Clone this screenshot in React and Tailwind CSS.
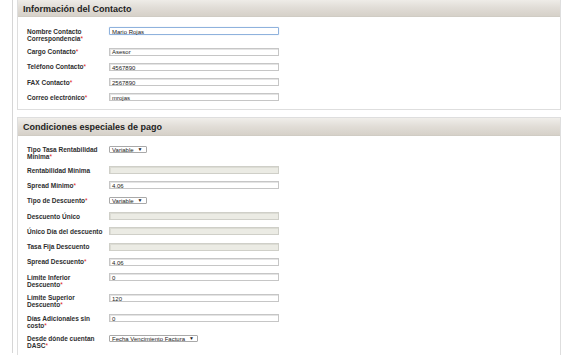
import React from "react";

const Req = () => <span className="text-[#e02020] font-normal">*</span>;

function Label({ lines, req }) {
  return (
    <div className="w-[82px] shrink-0 mt-[0.5px] text-[6.5px] leading-[7px] font-bold text-[#2e2e2e] whitespace-nowrap">
      {lines.map((l, i) => (
        <div key={i}>
          {l}
          {req && i === lines.length - 1 ? <Req /> : null}
        </div>
      ))}
    </div>
  );
}

function Field({ type, value, focus }) {
  if (type === "select") {
    return (
      <div className="h-[7px] mt-[0.5px] flex items-center pt-[1px] border border-[#a9a9a9] rounded-[1px] bg-white pl-[2px] pr-[3px] text-[6px] leading-none text-[#222] gap-[4px]">
        <span>{value}</span>
        <span className="text-[5px] leading-none -mt-[1px]">▼</span>
      </div>
    );
  }
  if (type === "disabled") {
    return (
      <div className="w-[170px] h-[8px] border border-[#cfcfc8] bg-[#ebebe4] shadow-[inset_1px_1px_0_#dcdcd4]" />
    );
  }
  return (
    <div
      className={
        "w-[170px] h-[8px] flex items-center pt-[1.5px] pl-[2px] text-[6px] leading-none text-[#222] bg-white " +
        (focus
          ? "border border-[#8fb2dd] rounded-[1px] shadow-[0_0_1px_#a9c6ea]"
          : "border border-[#c6c6c6] shadow-[inset_1px_1px_0_#e4e4e4]")
      }
    >
      {value}
    </div>
  );
}

function Row({ lines, req, type = "text", value = "", focus }) {
  const dbl = lines.length > 1;
  return (
    <div className={"flex items-start " + (dbl ? "h-[20.5px]" : "h-[15.3px]")}>
      <Label lines={lines} req={req} />
      <Field type={type} value={value} focus={focus} />
    </div>
  );
}

function Panel({ title, children, className = "" }) {
  return (
    <section className={"border border-[#dedede] bg-white " + className}>
      <div className="h-[18px] pt-[3px] flex items-center pl-[5px] bg-gradient-to-b from-[#f0eeea] via-[#e1ddd7] to-[#d6d1c9] border-b border-[#d0ccc4]">
        <span className="text-[9px] font-bold text-[#1e1e1e] leading-none">{title}</span>
      </div>
      <div className="pt-[10px] pl-[9px]">{children}</div>
    </section>
  );
}

export default function App() {
  return (
    <div
      className="w-[561px] h-[355px] overflow-hidden bg-white"
      style={{ fontFamily: '"Liberation Sans", Arial, sans-serif' }}
    >
      <div className="ml-[12px] h-full border-l border-[#d6d6d6] pl-[4px] w-[549px]">
        <Panel title="Información del Contacto" className="-mt-[2px]">
          <Row lines={["Nombre Contacto", "Correspondencia"]} req value="Mario Rojas" focus />
          <Row lines={["Cargo Contacto"]} req value="Asesor" />
          <Row lines={["Teléfono Contacto"]} req value="4567890" />
          <Row lines={["FAX Contacto"]} req value="2567890" />
          <Row lines={["Correo electrónico"]} req value="mrojas" />
        </Panel>
        <Panel title="Condiciones especiales de pago" className="mt-[7px]">
          <Row lines={["Tipo Tasa Rentabilidad", "Mínima"]} req type="select" value="Variable" />
          <Row lines={["Rentabilidad Mínima"]} type="disabled" />
          <Row lines={["Spread Mínimo"]} req value="4.06" />
          <Row lines={["Tipo de Descuento"]} req type="select" value="Variable" />
          <Row lines={["Descuento Único"]} type="disabled" />
          <Row lines={["Único Día del descuento"]} type="disabled" />
          <Row lines={["Tasa Fija Descuento"]} type="disabled" />
          <Row lines={["Spread Descuento"]} req value="4.06" />
          <Row lines={["Límite Inferior", "Descuento"]} req value="0" />
          <Row lines={["Límite Superior", "Descuento"]} req value="120" />
          <Row lines={["Días Adicionales sin", "costo"]} req value="0" />
          <Row lines={["Desde dónde cuentan", "DASC"]} req type="select" value="Fecha Vencimiento Factura" />
        </Panel>
      </div>
    </div>
  );
}
